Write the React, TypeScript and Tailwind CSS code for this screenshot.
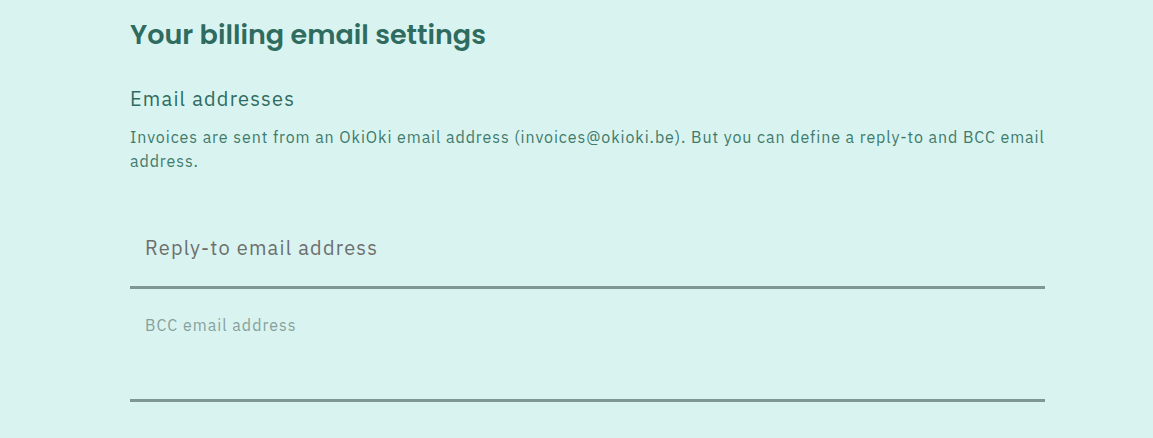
export default function App() {
  return (
    <div className="min-h-[438px] w-full bg-[#d9f4f0] font-['IBM_Plex_Sans','Noto_Sans',sans-serif]">
      <div className="ml-[130px] w-[915px] pt-[15px]">
        <h1 className="font-['Poppins','Open_Sans',sans-serif] text-[27px] leading-[40px] font-semibold text-[#2f6b5f]">
          Your billing email settings
        </h1>
        <h2 className="mt-[29px] text-[20px] leading-[30px] tracking-[1.2px] text-[#2f6b5f]">Email addresses</h2>
        <p className="mt-[11px] text-[16px] leading-[24px] tracking-[0.92px] text-[#3f7a6c]">
          Invoices are sent from an OkiOki email address (invoices@okioki.be). But you can define a reply-to and BCC email address.
        </p>
        <div className="mt-[36px] flex h-[80px] items-center border-b-[3px] border-[#7f9692] px-[15px]">
          <span className="text-[20px] tracking-[1.2px] text-[#6e6e6e]">Reply-to email address</span>
        </div>
        <div className="flex h-[113px] flex-col border-b-[3px] border-[#7f9692] px-[15px] pt-[24px]">
          <span className="text-[16px] leading-[24px] tracking-[1px] text-[#86a09b]">BCC email address</span>
        </div>
      </div>
    </div>
  );
}
